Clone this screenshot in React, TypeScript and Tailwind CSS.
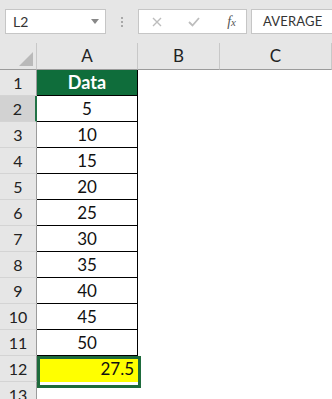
import { ChevronDown } from "lucide-react";

const data = [5, 10, 15, 20, 25, 30, 35, 40, 45, 50];

const font = { fontFamily: "Lato, 'Open Sans', sans-serif" };

function RowHead({ n, active }: { n: number; active?: boolean }) {
  return (
    <div
      className={`h-[26px] flex items-center justify-center text-[16px] text-[#222] border-b border-[#d4d4d4] ${
        active ? "bg-[#d2d2d2] border-r-2 border-r-[#217346]" : "bg-[#e6e6e6] border-r border-r-[#9b9b9b]"
      }`}
    >
      {n}
    </div>
  );
}

export default function App() {
  return (
    <div className="w-[332px] h-[399px] overflow-hidden bg-white select-none" style={font}>
      {/* formula bar */}
      <div className="h-[43px] bg-[#e6e6e6] flex items-start pt-[9px] pl-[5px]">
        <div className="w-[101px] h-[25px] bg-white border border-[#c6c6c6] flex items-center justify-between pl-[7px] pr-[6px]">
          <span className="text-[14px] text-[#333]">L2</span>
          <svg width="8" height="5" viewBox="0 0 8 5">
            <path d="M0 0h8L4 5z" fill="#888" />
          </svg>
        </div>
        <div className="w-[32px] h-[25px] flex flex-col items-center justify-center gap-[2px]">
          <span className="w-[2px] h-[2px] bg-[#a8a8a8]" />
          <span className="w-[2px] h-[2px] bg-[#a8a8a8]" />
          <span className="w-[2px] h-[2px] bg-[#a8a8a8]" />
        </div>
        <div className="w-[109px] h-[25px] bg-white border border-[#c6c6c6] flex items-center pl-[13px] pr-[10px]">
          <svg width="10" height="10" viewBox="0 0 10 10">
            <path d="M1 1l8 8M9 1l-8 8" stroke="#bdbdbd" strokeWidth="1.4" />
          </svg>
          <svg width="12" height="10" viewBox="0 0 12 10" className="ml-[26px]">
            <path d="M1 5l3.5 3.5L11 1" stroke="#bdbdbd" strokeWidth="1.8" fill="none" />
          </svg>
          <span className="ml-auto text-[14px] italic text-[#555]" style={{ fontFamily: "'Liberation Serif', serif" }}>
            f<span className="text-[11px]">x</span>
          </span>
        </div>
        <div className="ml-[4px] flex-1 h-[25px] bg-white border border-[#c6c6c6] border-r-0 flex items-center pl-[11px]">
          <span className="text-[13px] text-[#333] tracking-[0.2px]">AVERAGE</span>
        </div>
      </div>

      {/* sheet */}
      <div className="relative grid grid-cols-[37px_101px_82px_1fr]">
        {/* header row */}
        <div className="h-[27px] bg-[#e6e6e6] border-r border-[#c8c8c8] border-b border-b-[#9b9b9b] relative">
          <svg width="14" height="14" viewBox="0 0 14 14" className="absolute right-[3px] bottom-[3px]">
            <path d="M14 0V14H0z" fill="#b9b9b9" />
          </svg>
        </div>
        {["A", "B", "C"].map((c) => (
          <div
            key={c}
            className="h-[27px] bg-[#e6e6e6] border-r border-[#c8c8c8] border-b border-b-[#9b9b9b] flex items-center justify-center text-[17px] text-[#222]"
          >
            {c}
          </div>
        ))}

        {/* row 1 */}
        <RowHead n={1} />
        <div className="h-[26px] bg-[#0f6d3b] border-r border-b border-black flex items-center justify-center text-white font-bold text-[18px]">
          Data
        </div>
        <div className="h-[26px]" />
        <div className="h-[26px]" />

        {data.map((v, i) => (
          <div key={v} className="contents">
            <RowHead n={i + 2} active={i === 0} />
            <div className="h-[26px] border-r border-b border-black flex items-center justify-center text-[17px] text-[#111]">
              {v}
            </div>
            <div className="h-[26px]" />
            <div className="h-[26px]" />
          </div>
        ))}

        {/* row 12 */}
        <RowHead n={12} />
        <div className="h-[26px] bg-[#ffff00] flex items-center justify-end pr-[4px] text-[17px] text-[#111]">
          27.5
        </div>
        <div className="h-[26px]" />
        <div className="h-[26px]" />

        <RowHead n={13} />
        <div className="h-[26px]" />
        <div className="h-[26px]" />
        <div className="h-[26px]" />

        {/* selection outline */}
        <div className="absolute left-[37px] top-[313px] w-[104px] h-[32px] border-[3px] border-[#1e6b3c] pointer-events-none" />
      </div>
    </div>
  );
}
